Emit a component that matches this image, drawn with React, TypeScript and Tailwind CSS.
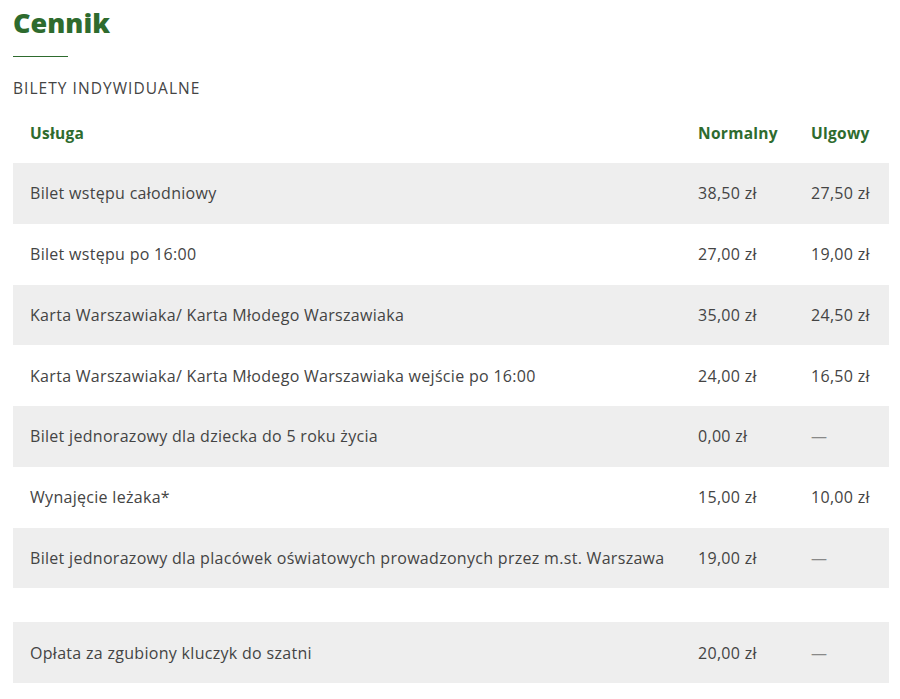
import React from 'react';

type Row = { name: string; normal: string; reduced: string };

const rows: Row[] = [
  { name: 'Bilet wstępu całodniowy', normal: '38,50 zł', reduced: '27,50 zł' },
  { name: 'Bilet wstępu po 16:00', normal: '27,00 zł', reduced: '19,00 zł' },
  { name: 'Karta Warszawiaka/ Karta Młodego Warszawiaka', normal: '35,00 zł', reduced: '24,50 zł' },
  { name: 'Karta Warszawiaka/ Karta Młodego Warszawiaka wejście po 16:00', normal: '24,00 zł', reduced: '16,50 zł' },
  { name: 'Bilet jednorazowy dla dziecka do 5 roku życia', normal: '0,00 zł', reduced: '—' },
  { name: 'Wynajęcie leżaka*', normal: '15,00 zł', reduced: '10,00 zł' },
  { name: 'Bilet jednorazowy dla placówek oświatowych prowadzonych przez m.st. Warszawa', normal: '19,00 zł', reduced: '—' },
];

const PriceRow = ({ row, shaded }: { row: Row; shaded: boolean }) => (
  <div className={`grid grid-cols-[668px_113px_95px] h-[60.75px] items-center ${shaded ? 'bg-[#eeeeee]' : ''}`}>
    <div className="pl-[17px] whitespace-nowrap">{row.name}</div>
    <div className="pl-[17px] whitespace-nowrap">{row.normal}</div>
    <div className={`pl-[17px] whitespace-nowrap ${row.reduced === '—' ? 'text-[#888]' : ''}`}>{row.reduced}</div>
  </div>
);

export default function App() {
  return (
    <div className="w-[900px] h-[699px] bg-white overflow-hidden px-[13px] pt-[5px] text-[#444444] font-['Open_Sans',sans-serif] text-[16px] tracking-[0.3px]">
      <h1 className="text-[27px] leading-[36px] font-extrabold text-[#2e6b2e] tracking-normal">Cennik</h1>
      <div className="mt-[15px] w-[55px] h-px bg-[#2e6b2e]" />
      <div className="mt-[20px] leading-[22px] uppercase text-[15.5px] tracking-[1.05px]">Bilety indywidualne</div>

      <div className="w-[876px] mt-[11px]">
        <div className="grid grid-cols-[668px_113px_95px] h-[53px] pt-[11px] leading-[24px] font-bold text-[#2e6b2e] text-[15.5px]">
          <div className="pl-[17px]">Usługa</div>
          <div className="pl-[17px]">Normalny</div>
          <div className="pl-[17px]">Ulgowy</div>
        </div>
        {rows.map((row, i) => (
          <PriceRow key={row.name} row={row} shaded={i % 2 === 0} />
        ))}
        <div className="h-[34px]" />
        <PriceRow row={{ name: 'Opłata za zgubiony kluczyk do szatni', normal: '20,00 zł', reduced: '—' }} shaded />
      </div>
    </div>
  );
}
